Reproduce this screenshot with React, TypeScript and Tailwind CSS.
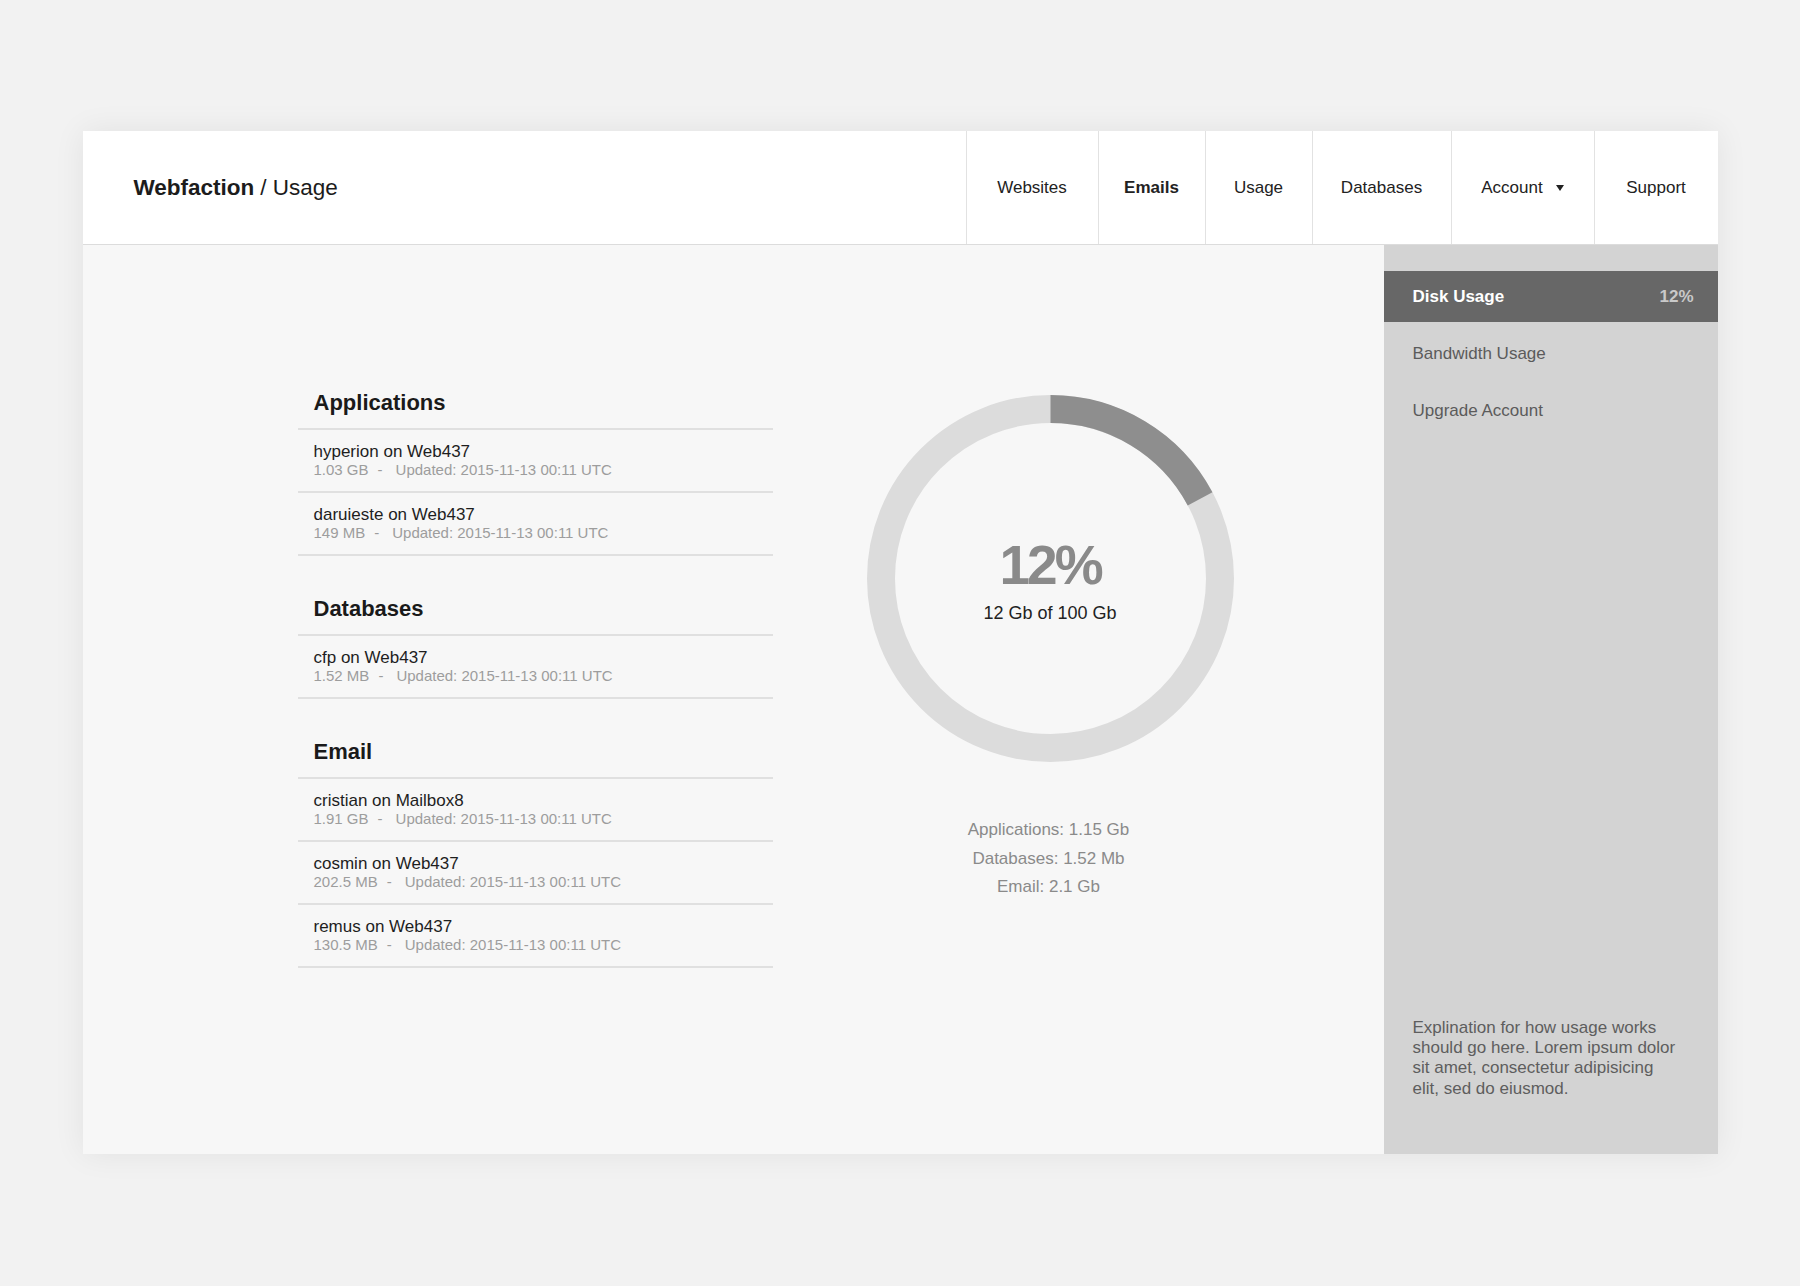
import React from 'react'

type Entry = { name: string; size: string }

type Section = { title: string; entries: Entry[] }

const UPDATED = 'Updated: 2015-11-13 00:11 UTC'

const SECTIONS: Section[] = [
  {
    title: 'Applications',
    entries: [
      { name: 'hyperion on Web437', size: '1.03 GB' },
      { name: 'daruieste on Web437', size: '149 MB' },
    ],
  },
  {
    title: 'Databases',
    entries: [{ name: 'cfp on Web437', size: '1.52 MB' }],
  },
  {
    title: 'Email',
    entries: [
      { name: 'cristian on Mailbox8', size: '1.91 GB' },
      { name: 'cosmin on Web437', size: '202.5 MB' },
      { name: 'remus on Web437', size: '130.5 MB' },
    ],
  },
]

const NAV = [
  { label: 'Websites', width: 'w-[132px]' },
  { label: 'Emails', width: 'w-[107px]', bold: true },
  { label: 'Usage', width: 'w-[107px]' },
  { label: 'Databases', width: 'w-[139px]' },
  { label: 'Account', width: 'w-[143px]', dropdown: true },
  { label: 'Support', width: 'w-[124px]' },
]

const BREAKDOWN = ['Applications: 1.15 Gb', 'Databases: 1.52 Mb', 'Email: 2.1 Gb']

function Header() {
  return (
    <header className="flex h-[114px] items-stretch border-b border-[#dcdcdc] bg-white">
      <div className="flex flex-1 items-center pl-[51px] text-[22.5px] text-[#1c1c1c]">
        <span className="font-bold">Webfaction</span>
        <span className="ml-[6px]">/ Usage</span>
      </div>
      <nav className="flex items-stretch">
        {NAV.map((item) => (
          <a
            key={item.label}
            href="#"
            className={`flex ${item.width} items-center justify-center border-l border-[#e2e2e2] text-[17px] text-[#222] ${item.bold ? 'font-bold' : ''}`}
          >
            {item.label}
            {item.dropdown && (
              <svg width="8" height="6" viewBox="0 0 8 6" className="ml-[13px]">
                <path d="M0 0h8L4 6z" fill="#222" />
              </svg>
            )}
          </a>
        ))}
      </nav>
    </header>
  )
}

function UsageList() {
  return (
    <div className="w-[475px]">
      {SECTIONS.map((section, i) => (
        <section key={section.title} className={i > 0 ? 'mt-[39px]' : ''}>
          <h2 className="border-b-2 border-[#e0e0e0] pb-[11px] pl-4 text-[22px] leading-[28px] font-bold text-[#1a1a1a]">
            {section.title}
          </h2>
          {section.entries.map((entry) => (
            <div key={entry.name} className="border-b-2 border-[#e0e0e0] pt-[12px] pb-[12px] pl-4">
              <div className="text-[17px] leading-[19px] text-[#1e1e1e]">{entry.name}</div>
              <div className="text-[15px] leading-[18px] text-[#9d9d9d]">
                {entry.size}
                <span className="ml-[9px]">-</span>
                <span className="ml-[13px]">{UPDATED}</span>
              </div>
            </div>
          ))}
        </section>
      ))}
    </div>
  )
}

function DonutChart({ percent }: { percent: number }) {
  const size = 367
  const stroke = 28
  const r = (size - stroke) / 2
  const c = 2 * Math.PI * r
  // the drawn arc is a bit longer than the label, as in the design
  const arc = c * 0.172

  return (
    <div className="relative h-[367px] w-[367px]">
      <svg width={size} height={size} viewBox={`0 0 ${size} ${size}`}>
        <circle cx={size / 2} cy={size / 2} r={r} fill="none" stroke="#dcdcdc" strokeWidth={stroke} />
        <circle
          cx={size / 2}
          cy={size / 2}
          r={r}
          fill="none"
          stroke="#8e8e8e"
          strokeWidth={stroke}
          strokeDasharray={`${arc} ${c}`}
          transform={`rotate(-90 ${size / 2} ${size / 2})`}
        />
      </svg>
      <div className="absolute inset-0 flex flex-col items-center justify-center pt-[1px]">
        <div className="text-[55px] leading-[60px] font-bold tracking-[-3px] text-[#8a8a8a]">{percent}%</div>
        <div className="mt-[8px] text-[18px] leading-[20px] text-[#222]">12 Gb of 100 Gb</div>
      </div>
    </div>
  )
}

function Sidebar() {
  return (
    <aside className="flex w-[334px] flex-col bg-[#d3d3d3] pt-[26px]">
      <a href="#" className="flex h-[51px] items-center justify-between bg-[#676767] pr-[24px] pl-[29px] text-[17px] font-bold">
        <span className="text-white">Disk Usage</span>
        <span className="text-[#c9c9c9]">12%</span>
      </a>
      <a href="#" className="mt-[6px] flex h-[51px] items-center pl-[29px] text-[17px] text-[#5b5b5b]">
        Bandwidth Usage
      </a>
      <a href="#" className="mt-[6px] flex h-[51px] items-center pl-[29px] text-[17px] text-[#5b5b5b]">
        Upgrade Account
      </a>
      <p className="mt-auto pr-[37px] pb-[55px] pl-[29px] text-[17px] leading-[20.3px] text-[#5e5e5e]">
        Explination for how usage works should go here. Lorem ipsum dolor sit amet, consectetur adipisicing elit, sed do
        eiusmod.
      </p>
    </aside>
  )
}

export default function App() {
  return (
    <div className="min-h-[1286px] bg-[#f2f2f2] pt-[131px] font-['Liberation_Sans',Arial,sans-serif]">
      <div className="mx-auto w-[1635px] bg-white shadow-[0_0_30px_rgba(0,0,0,0.07)]">
        <Header />
        <div className="flex h-[909px]">
          <main className="flex flex-1 bg-[#f7f7f7] pt-[144px] pl-[215px]">
            <UsageList />
            <div className="ml-[94px] flex flex-col items-center pt-[6px]">
              <DonutChart percent={12} />
              <div className="mt-[54px] pr-[3px] text-center text-[17px] leading-[28.5px] text-[#8a8a8a]">
                {BREAKDOWN.map((line) => (
                  <div key={line}>{line}</div>
                ))}
              </div>
            </div>
          </main>
          <Sidebar />
        </div>
      </div>
    </div>
  )
}
